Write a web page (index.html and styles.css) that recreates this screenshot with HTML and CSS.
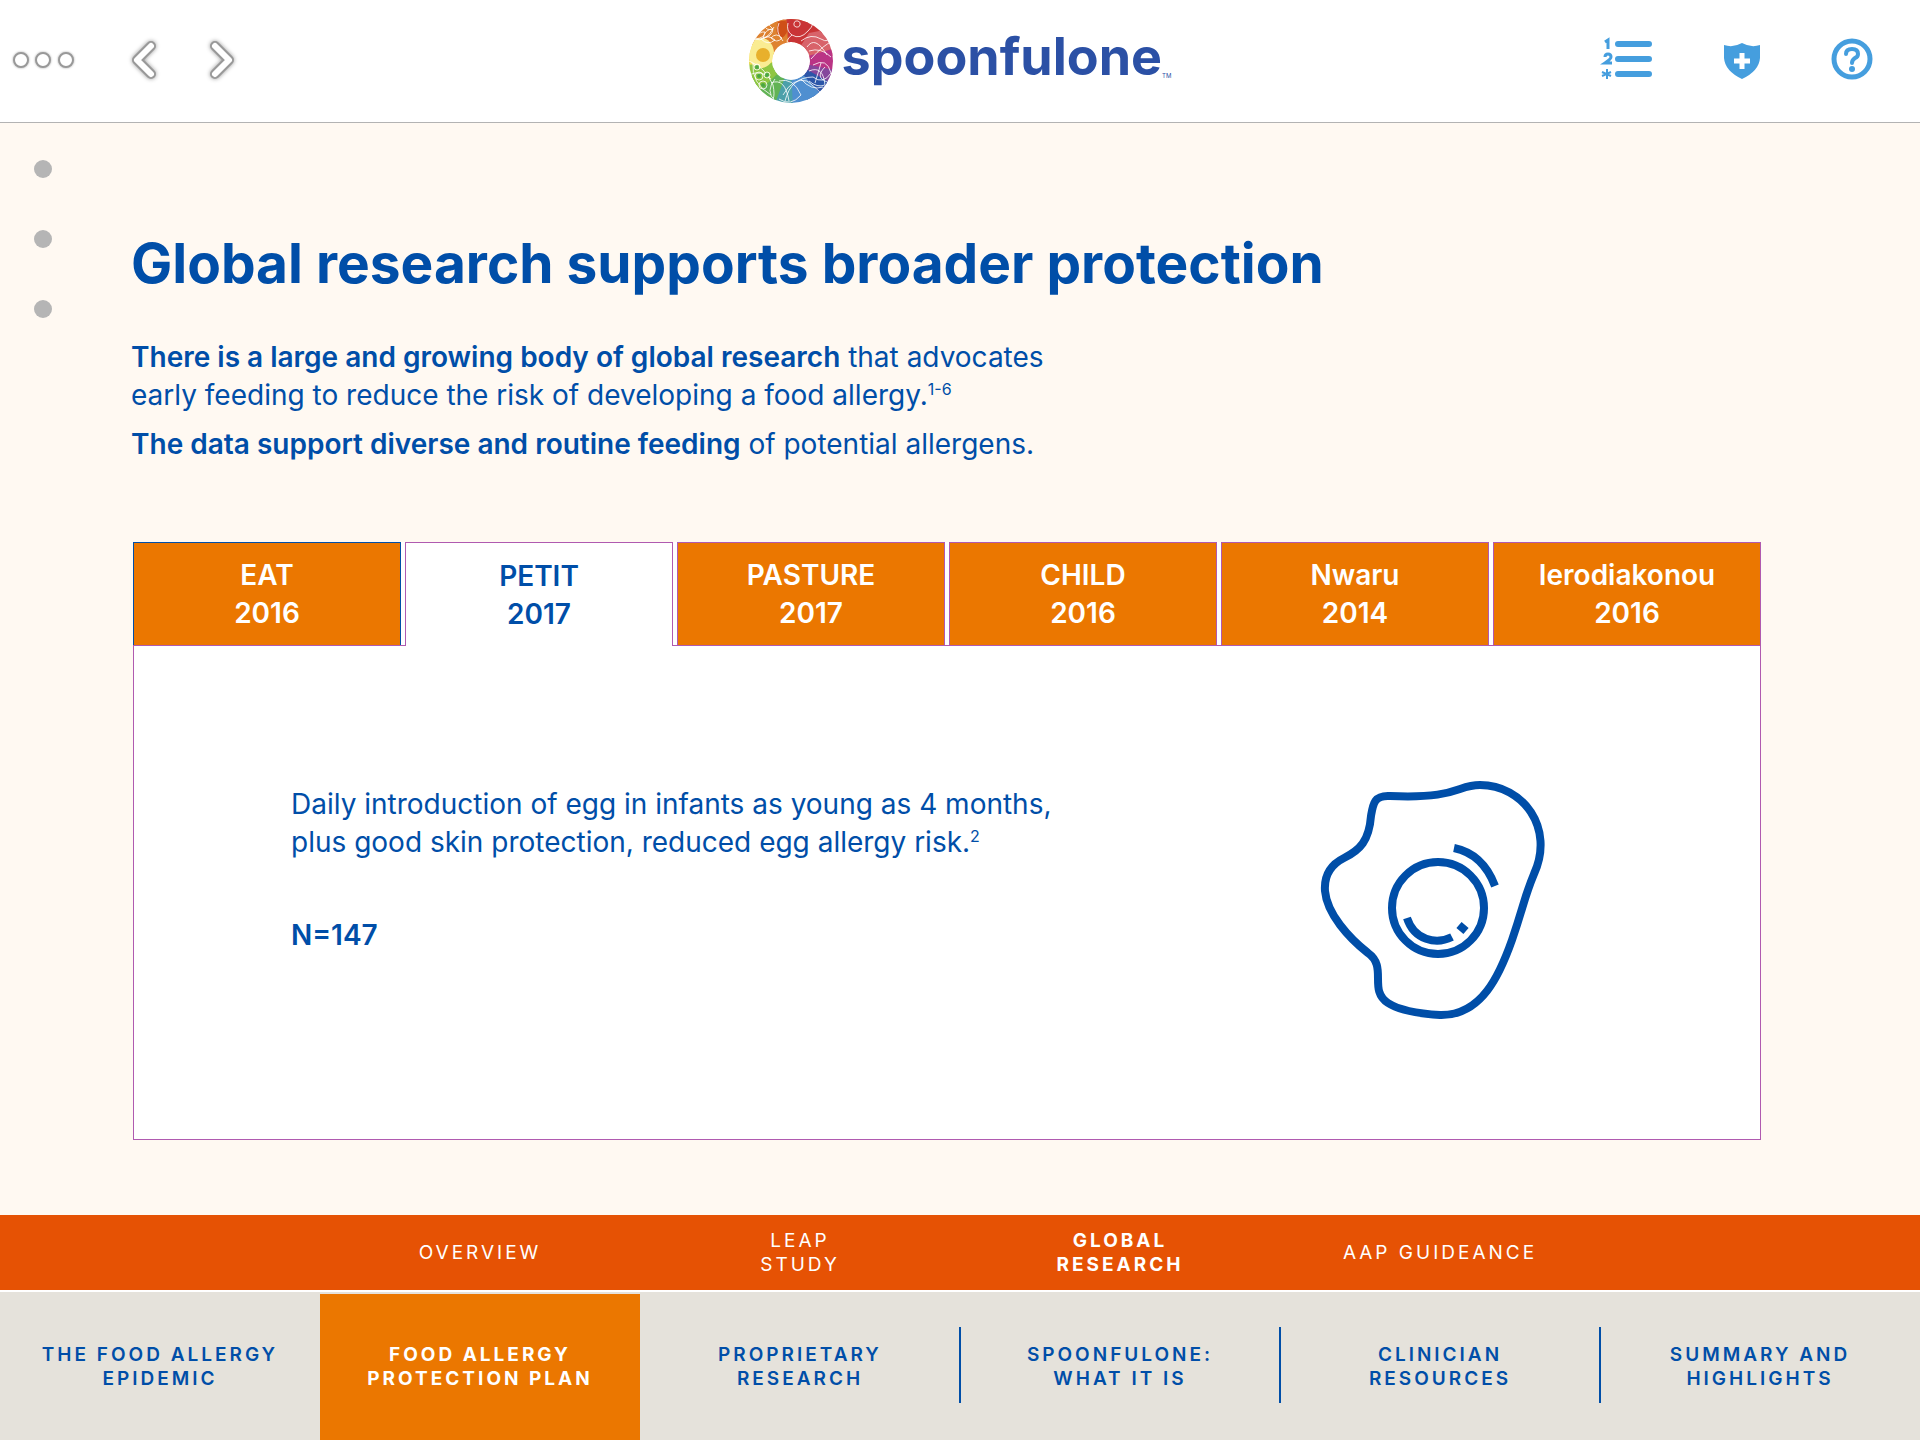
FILE: index.html
```html
<!DOCTYPE html>
<html lang="en">
<head>
    <meta charset="UTF-8">
    <meta name="viewport" content="width=device-width, initial-scale=1.0">
    <link rel="stylesheet" href="styles.css">
    <title>Global research | SpoonfulOne</title>
</head>
<body>
    <header class="topbar">
        <div class="topbar-left">
            <button type="button" class="icon-btn" aria-label="More">
                <svg width="78" height="30" viewBox="0 0 78 30" class="soft">
                    <circle cx="13" cy="15" r="7"/>
                    <circle cx="35" cy="15" r="7"/>
                    <circle cx="58" cy="15" r="7"/>
                </svg>
            </button>
            <button type="button" class="icon-btn" aria-label="Previous">
                <svg width="40" height="48" viewBox="0 0 40 48" class="chevron">
                    <path class="edge" d="M27 10 L13 24 L27 38"/>
                    <path class="fill" d="M27 10 L13 24 L27 38"/>
                </svg>
            </button>
            <button type="button" class="icon-btn" aria-label="Next">
                <svg width="40" height="48" viewBox="0 0 40 48" class="chevron">
                    <path class="edge" d="M13 10 L27 24 L13 38"/>
                    <path class="fill" d="M13 10 L27 24 L13 38"/>
                </svg>
            </button>
        </div>

        <a href="#" class="logo">
            <svg width="84" height="84" viewBox="0 0 84 84">
                <defs>
                    <clipPath id="ring">
                        <path clip-rule="evenodd" d="M42 0a42 42 0 1 1 0 84a42 42 0 1 1 0-84zM42 23a19 19 0 1 0 0 38a19 19 0 1 0 0-38z"/>
                    </clipPath>
                </defs>
                <g clip-path="url(#ring)">
                    <path fill="#d9622b" d="M42 42L20 -10H66z"/>
                    <path fill="#de8230" d="M42 42L-6 24L4 -8H34z"/>
                    <path fill="#c93436" d="M42 42L37 -4H72L74 22z"/>
                    <path fill="#d8636a" d="M42 42L60 14L90 8V36z"/>
                    <path fill="#ba3485" d="M42 42L90 28V60z"/>
                    <path fill="#85479c" d="M42 42L90 52L78 76z"/>
                    <path fill="#2b55a8" d="M42 42L86 66L62 90z"/>
                    <path fill="#4f8fd0" d="M42 42L74 78L40 92z"/>
                    <path fill="#4ba0aa" d="M42 42L44 92L16 90z"/>
                    <path fill="#62b355" d="M42 42L24 90L-6 60z"/>
                    <path fill="#8fc641" d="M42 42L6 76L-6 40z"/>
                    <path fill="#f6dc58" d="M42 42L-4 46V20z"/>
                    <ellipse cx="12" cy="34" rx="13" ry="15" fill="#faec92"/>
                    <circle cx="14" cy="36" r="7" fill="#e8b02c"/>
                    <path fill="#cf4f17" d="M29 3q9-4 10 4q0 8-6 12q-7-4-5-10z"/>
                    <g fill="none" stroke="#fff" stroke-width="1" stroke-opacity=".8">
                        <path d="M5 20q12 4 20-12M6 20q4-8 10-7q0 6-10 7M14 19q2-9 10-9q-1 8-10 9M24 10q-3-5-8-4q0 6 8 4M12 20q7 7 14 1q-7-6-14-1M22 19q6 6 11 0q-6-6-11 0"/>
                        <path d="M34 22q-8-9-4-18M39 4q-2 8 4 12q8 5 16-4q8-8 2-9M43 16q-8 6-3 10M45 4a3 3 0 1 0 6 2a3 3 0 1 0-6-2M52 22q10-8 20-2q8 5 10-4M58 28q8-12 20 8"/>
                        <path d="M60 32q12-4 22 6M62 40q12-14 22-18M64 46q14-8 18 8q-8 12-18 4M60 52q14-6 16 14q-8 3-16-4M72 44l-6 20M76 48q-12 12 6 16"/>
                        <path d="M30 62q14-4 22 14q-10 12-22 4M34 76q10-18 24-14q8 6 14 12M36 82q6-24 28-24M22 64q14-6 18 18M26 82q-10-10 0-22M52 60q10 12 22 8"/>
                        <path d="M0 42q16 6 24 24q2 10 0 14M4 44q-2 20 18 32M0 56q12-6 22 4"/>
                        <circle cx="8" cy="48" r="3"/>
                        <circle cx="10" cy="57" r="4"/>
                        <circle cx="14" cy="66" r="4"/>
                        <circle cx="18" cy="56" r="3"/>
                    </g>
                    <g fill="#4aa645">
                        <circle cx="8" cy="48" r="2"/>
                        <circle cx="10" cy="57" r="2"/>
                        <circle cx="14" cy="66" r="2"/>
                        <circle cx="18" cy="56" r="2"/>
                    </g>
                </g>
            </svg>
            <span class="logo-name">spoonfulone</span>
            <span class="logo-tm">TM</span>
        </a>

        <div class="topbar-right">
            <button type="button" class="icon-btn" aria-label="References">
                <svg width="52" height="44" viewBox="0 0 52 44" fill="none" stroke="#459ede">
                    <path stroke-width="6" stroke-linecap="round" d="M17 5H48M17 20H48M17 35H48"/>
                    <path stroke-width="3" d="M4 3L7 1V10M4 18q0-3 3-3t3 3q0 2-6 6h7"/>
                    <path stroke-width="2" d="M6 30v10M1 33l9 4M10 33l-9 4"/>
                </svg>
            </button>
            <button type="button" class="icon-btn" aria-label="Safety information">
                <svg width="38" height="38" viewBox="0 0 38 38">
                    <path fill="#459ede" d="M1 3Q10 6 19 1Q28 6 37 3V16Q36 29 19 37Q2 29 1 16z"/>
                    <path stroke="#fff" stroke-width="5" d="M19 11V27M11 19H27"/>
                </svg>
            </button>
            <button type="button" class="icon-btn" aria-label="Help">
                <svg width="42" height="42" viewBox="0 0 42 42" fill="none" stroke="#459ede" stroke-width="5">
                    <circle cx="21" cy="19" r="18"/>
                    <path stroke-width="4" stroke-linecap="round" d="M15 14Q15 9 21 9T27 14Q27 17 24 18Q21 20 21 23"/>
                    <circle cx="21" cy="29" r="3" fill="#459ede" stroke="none"/>
                </svg>
            </button>
        </div>
    </header>

    <main class="page">
        <nav class="dots" aria-label="Sections">
            <a href="#" aria-label="Section 1"></a>
            <a href="#" aria-label="Section 2"></a>
            <a href="#" aria-label="Section 3"></a>
        </nav>

        <div class="content">
            <h1>Global research supports broader protection</h1>
            <p class="intro"><strong>There is a large and growing body of global research</strong> that advocates<br>
            early feeding to reduce the risk of developing a food allergy.<sup>1-6</sup></p>
            <p class="intro"><strong>The data support diverse and routine feeding</strong> of potential allergens.</p>

            <div class="tabs" role="tablist">
                <button type="button" class="tab first" role="tab">EAT<br>2016</button>
                <button type="button" class="tab active" role="tab" aria-selected="true">PETIT<br>2017</button>
                <button type="button" class="tab" role="tab">PASTURE<br>2017</button>
                <button type="button" class="tab" role="tab">CHILD<br>2016</button>
                <button type="button" class="tab" role="tab">Nwaru<br>2014</button>
                <button type="button" class="tab" role="tab">Ierodiakonou<br>2016</button>
            </div>
            <section class="panel" role="tabpanel">
                <div class="study">
                    <p>Daily introduction of egg in infants as young as 4 months,<br>
                    plus good skin protection, reduced egg allergy risk.<sup>2</sup></p>
                    <p class="sample">N=147</p>
                </div>
                <svg class="egg" width="240" height="250" viewBox="1310 775 240 250">
                    <path d="M1390 796C1374 795 1373 804 1371 816C1369 841 1360 850 1344 858C1330 865 1324 877 1325 891C1327 914 1349 938 1368 953C1388 967 1368 990 1388 1003C1402 1012 1424 1014 1440 1015C1482 1016 1500 974 1512 940C1524 905 1524 898 1534 874C1555 828 1523 785 1480 785C1456 785 1459 799 1390 796z"/>
                    <circle cx="1438" cy="908" r="46"/>
                    <path d="M1454 848Q1483 854 1495 886M1407 918C1414 940 1436 945 1452 937M1459 925l7 6"/>
                </svg>
            </section>
        </div>
    </main>

    <footer>
        <nav class="subnav" aria-label="Food allergy protection plan">
            <a href="#">OVERVIEW</a>
            <a href="#">LEAP<br>STUDY</a>
            <a href="#" class="current">GLOBAL<br>RESEARCH</a>
            <a href="#">AAP GUIDEANCE</a>
        </nav>
        <nav class="mainnav" aria-label="Main">
            <a href="#">THE FOOD ALLERGY<br>EPIDEMIC</a>
            <a href="#" class="current">FOOD ALLERGY<br>PROTECTION PLAN</a>
            <a href="#">PROPRIETARY<br>RESEARCH</a>
            <a href="#" class="divided">SPOONFULONE:<br>WHAT IT IS</a>
            <a href="#" class="divided">CLINICIAN<br>RESOURCES</a>
            <a href="#" class="divided">SUMMARY AND<br>HIGHLIGHTS</a>
        </nav>
    </footer>
</body>
</html>
```
FILE: styles.css
```css
* {
    box-sizing: border-box;
}

body {
    margin: 0;
    min-height: 100vh;
    display: flex;
    flex-direction: column;
    font-family: Inter, "Open Sans", sans-serif;
    color: #004ea8;
    background-color: #fff9f2;
}

a {
    color: inherit;
    text-decoration: none;
}

/* top bar */
.topbar {
    display: grid;
    grid-template-columns: 1fr auto 1fr;
    align-items: center;
    height: 123px;
    padding: 0 8px;
    background-color: #fff;
    border-bottom: 1px solid #b3b3b3;
}

.topbar-left, .topbar-right {
    display: flex;
    align-items: center;
}

.topbar-left {
    gap: 38px;
    padding-bottom: 2px;
}

.topbar-right {
    justify-content: flex-end;
    gap: 70px;
    padding-right: 39px;
}

.icon-btn {
    display: flex;
    padding: 0;
    border: none;
    background: none;
    cursor: pointer;
}

.icon-btn svg {
    overflow: visible;
}

.soft {
    fill: #fff;
    stroke: #999;
    stroke-width: 2;
    filter: drop-shadow(0 0 1px #aaa);
}

.chevron {
    fill: none;
    stroke-linecap: round;
    stroke-linejoin: round;
    filter: drop-shadow(0 0 2px #999);
}

.chevron .edge {
    stroke: #999;
    stroke-width: 10;
}

.chevron .fill {
    stroke: #fff;
    stroke-width: 6;
}

.logo {
    display: flex;
    align-items: center;
    color: #2b50a5;
}

.logo-name {
    margin-left: 9px;
    padding-bottom: 8px;
    font-size: 52px;
    font-weight: 700;
    line-height: 76px;
}

.logo-tm {
    align-self: flex-end;
    padding-bottom: 22px;
    font-size: 6px;
    line-height: 10px;
}

/* page */
.page {
    flex: 1;
    display: flex;
}

.dots {
    display: flex;
    flex-direction: column;
    gap: 52px;
    width: 131px;
    padding: 37px 0 0 34px;
}

.dots a {
    width: 18px;
    height: 18px;
    border-radius: 50%;
    background-color: #b5b5b5;
}

.content {
    flex: 1;
    padding: 105px 159px 74px 0;
}

h1 {
    margin: 0 0 40px;
    font-size: 55px;
    font-weight: 700;
    line-height: 70px;
}

.intro {
    margin: 0 0 11px;
    font-size: 28px;
    line-height: 38px;
}

.intro strong {
    font-weight: 600;
}

sup {
    font-size: 16px;
    line-height: 0;
}

.tabs {
    display: grid;
    grid-template-columns: repeat(6, 1fr);
    gap: 4px;
    margin: 79px 0 0 2px;
    background-color: #fff;
}

.tab {
    height: 103px;
    padding: 0;
    border: 1px solid #b05ab0;
    border-bottom: none;
    background-color: #eb7700;
    color: #fff;
    font-family: inherit;
    font-size: 28px;
    font-weight: 600;
    line-height: 38px;
    cursor: pointer;
}

.tab.first {
    border-color: #004ea8;
}

/* open tab covers the top line of the panel */
.tab.active {
    position: relative;
    height: 104px;
    margin-bottom: -1px;
    background-color: #fff;
    color: #004ea8;
}

.panel {
    display: flex;
    justify-content: space-between;
    margin-left: 2px;
    padding: 129px 210px 114px 157px;
    border: 1px solid #b05ab0;
    background-color: #fff;
}

.study {
    padding-top: 10px;
    font-size: 28px;
    line-height: 38px;
}

.study p {
    margin: 0 0 55px;
}

.study .sample {
    font-weight: 600;
}

.egg {
    fill: none;
    stroke: #004ea8;
    stroke-width: 8;
}

/* bottom navigation */
.subnav, .mainnav {
    display: grid;
    grid-template-columns: repeat(6, 1fr);
    font-size: 19px;
    line-height: 24px;
    letter-spacing: 3px;
    text-align: center;
}

.subnav a, .mainnav a {
    display: flex;
    align-items: center;
    justify-content: center;
}

.subnav {
    min-height: 75px;
    background-color: #e65204;
    color: #fff;
}

.subnav a:first-child {
    grid-column-start: 2;
}

.subnav .current {
    font-weight: 700;
}

.mainnav {
    border-top: 2px solid #fff;
    padding-top: 2px;
    background-color: #e5e2db;
    font-weight: 600;
}

.mainnav a {
    position: relative;
    min-height: 146px;
}

.mainnav .current {
    background-color: #eb7700;
    color: #fff;
    font-weight: 700;
}

.mainnav .divided::before {
    content: "";
    position: absolute;
    left: -1px;
    top: 33px;
    bottom: 37px;
    width: 2px;
    background-color: #004ea8;
}
```
